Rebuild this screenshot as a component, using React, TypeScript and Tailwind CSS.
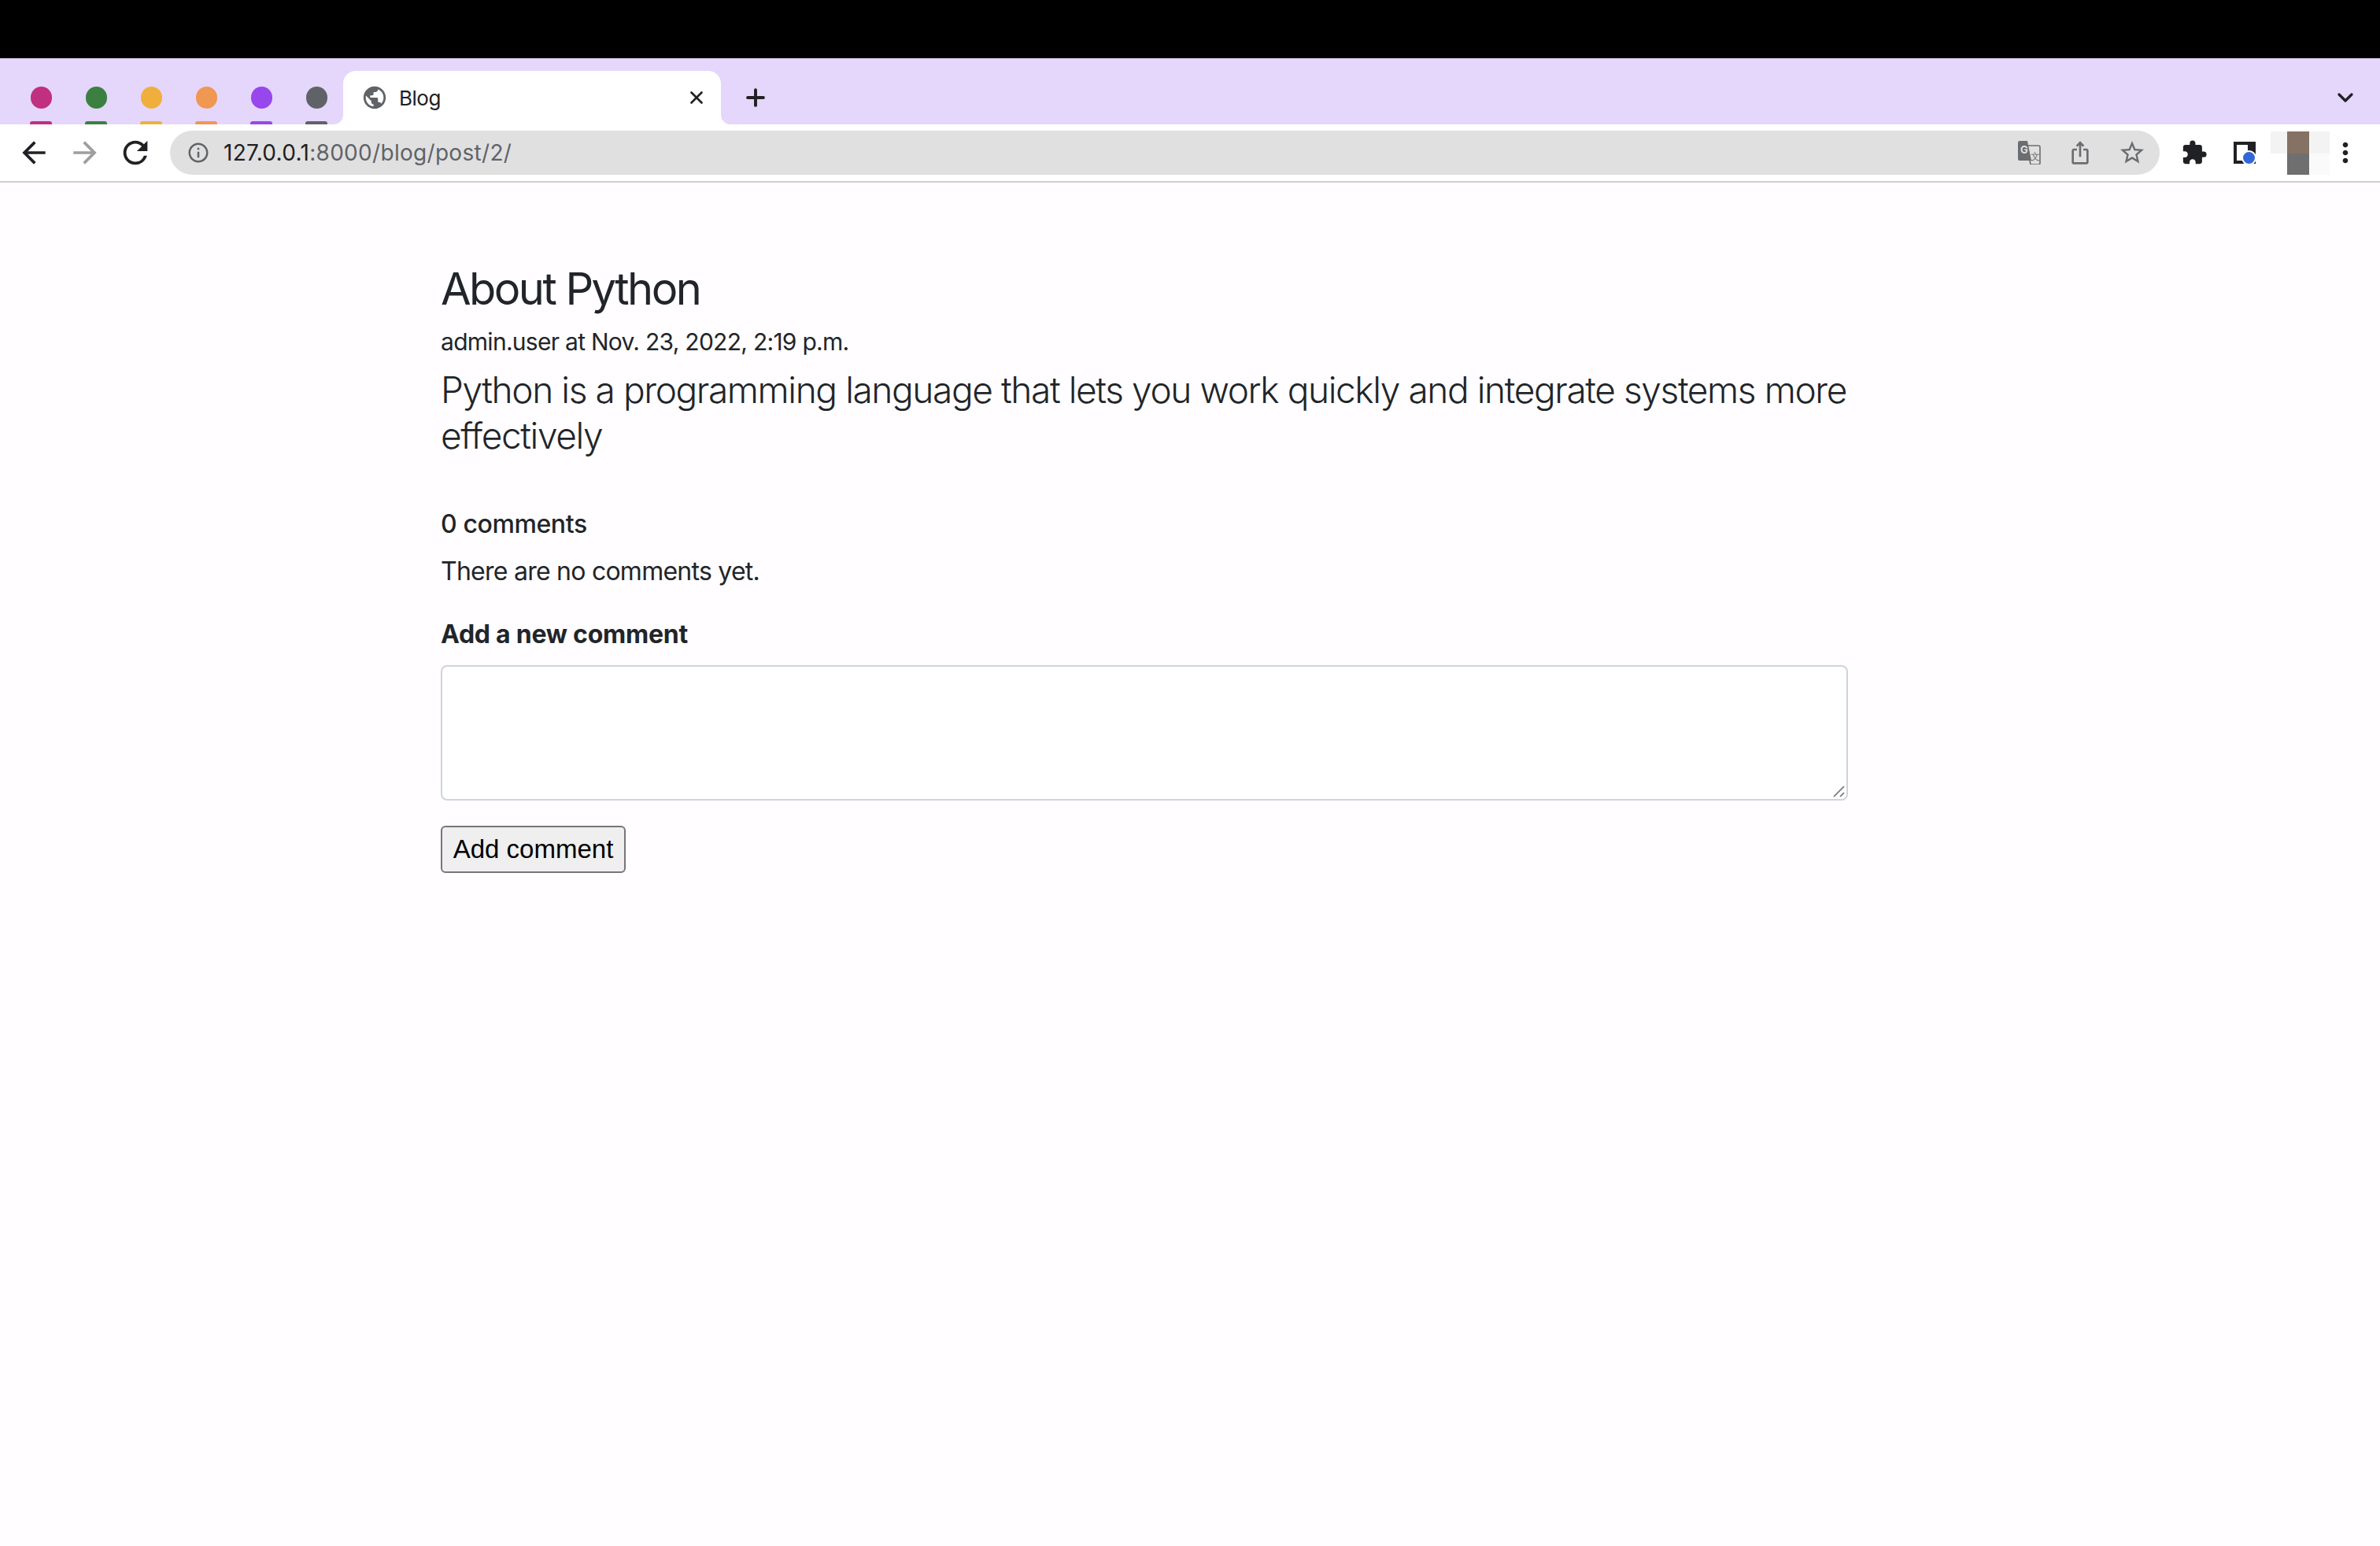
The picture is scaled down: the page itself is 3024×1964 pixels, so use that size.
import React from "react";
import { ChevronDown, Plus, X } from "lucide-react";
import {
  MdArrowBack,
  MdArrowForward,
  MdExtension,
  MdInfoOutline,
  MdIosShare,
  MdMoreVert,
  MdPublic,
  MdRefresh,
  MdStarBorder,
} from "react-icons/md";

const pinnedTabs = [
  "bg-[#c12f81]",
  "bg-[#3b8040]",
  "bg-[#f0af3c]",
  "bg-[#f09752]",
  "bg-[#9747ec]",
  "bg-[#5f6368]",
];

const TranslateIcon = () => (
  <svg width="30" height="30" viewBox="0 0 30 30">
    <path d="M1 2a2 2 0 0 1 2-2h10l5 25H3a2 2 0 0 1-2-2z" fill="#6b6d70" />
    <path
      d="M13 6h14a2 2 0 0 1 2 2v20a2 2 0 0 1-2 2H17l-1-5"
      fill="none"
      stroke="#6b6d70"
      strokeWidth="1.6"
    />
    <text x="4" y="16" fontSize="13" fontWeight="700" fill="#e0e0e0" fontFamily="Inter, sans-serif">
      G
    </text>
    <text x="17" y="24" fontSize="12" fill="#6b6d70" fontFamily="Inter, sans-serif">
      文
    </text>
  </svg>
);

const SidePanelIcon = () => (
  <div className="relative w-[28px] h-[28px] bg-[#202124]">
    <div className="absolute left-[4px] top-[4px] w-[14px] h-[20px] bg-white" />
    <div className="absolute right-[-1px] bottom-[-2px] w-[15px] h-[15px] rounded-full bg-[#3367d6] border-2 border-white box-content" />
  </div>
);

const Avatar = () => (
  <div className="grid grid-cols-[21px_28px_26px] grid-rows-[28px_27px] w-[75px] h-[55px]">
    <div className="bg-[#f3f3f3]" />
    <div className="bg-[#857264]" />
    <div className="bg-[#f3f3f3]" />
    <div className="bg-white" />
    <div className="bg-[#6f6f6f]" />
    <div className="bg-[#fafafa]" />
  </div>
);

const TabStrip = () => (
  <div className="flex h-[84px] bg-[#e5d6fb] pl-[17px]">
    {pinnedTabs.map((color) => (
      <div key={color} className="w-[70px] h-full flex flex-col items-center justify-end">
        <div className={`w-[27px] h-[28px] rounded-full ${color}`} />
        <div className={`w-[28px] h-[4px] mt-[16px] rounded-t-[3px] ${color}`} />
      </div>
    ))}
    <div className="relative w-[480px] h-[68px] mt-[16px] ml-[-1px] bg-white rounded-t-[16px] flex items-center pl-[26px] pr-[18px]">
      {/* flared corners at the foot of the active tab */}
      <svg className="absolute left-[-12px] bottom-0" width="12" height="12" viewBox="0 0 12 12">
        <path d="M12 0v12H0A12 12 0 0 0 12 0z" fill="#fff" />
      </svg>
      <svg className="absolute right-[-12px] bottom-0" width="12" height="12" viewBox="0 0 12 12">
        <path d="M0 0v12h12A12 12 0 0 1 0 0z" fill="#fff" />
      </svg>
      <MdPublic className="w-[34px] h-[34px] text-[#5f6368] -ml-[3px]" />
      <span className="ml-[14px] text-[26px] tracking-[-0.5px] text-[#202124]">Blog</span>
      <X className="w-[26px] h-[26px] ml-auto text-[#202124]" strokeWidth={2.5} />
    </div>
    <div className="flex items-center h-[52px] mt-[24px] ml-[27px]">
      <Plus className="w-[34px] h-[34px] text-[#202124]" strokeWidth={2.75} />
    </div>
    <div className="flex items-center h-[52px] mt-[24px] ml-auto mr-[28px]">
      <ChevronDown className="w-[32px] h-[32px] text-[#202124]" strokeWidth={2.5} />
    </div>
  </div>
);

const Toolbar = () => (
  <div className="flex items-center h-[74px] bg-white border-b-2 border-[#cfcfcf] pl-[21px]">
    <MdArrowBack className="w-[44px] h-[44px] text-[#202124]" />
    <MdArrowForward className="w-[44px] h-[44px] ml-[21px] text-[#9e9e9e]" />
    <MdRefresh className="w-[46px] h-[46px] ml-[19px] text-[#202124]" />
    <div className="flex items-center w-[2528px] h-[56px] ml-[21px] rounded-full bg-[#e0e0e0] pl-[21px]">
      <MdInfoOutline className="w-[30px] h-[30px] text-[#5f6368]" />
      <span className="ml-[17px] text-[28px] tracking-[0.3px] text-[#202124]">
        127.0.0.1<span className="text-[#5f6368]">:8000/blog/post/2/</span>
      </span>
      <div className="ml-auto flex items-center gap-[34px] pr-[17px]">
        <TranslateIcon />
        <MdIosShare className="w-[32px] h-[32px] text-[#6b6d70]" />
        <MdStarBorder className="w-[36px] h-[36px] text-[#6b6d70] -ml-[2px]" />
      </div>
    </div>
    <MdExtension className="w-[34px] h-[34px] ml-[27px] text-[#202124]" />
    <div className="ml-[33px]">
      <SidePanelIcon />
    </div>
    <div className="ml-[19px]">
      <Avatar />
    </div>
    <MdMoreVert className="w-[40px] h-[40px] text-[#202124]" />
  </div>
);

const App: React.FC = () => {
  return (
    <div className="w-[3024px] min-h-[1964px] bg-[#fffdff] font-['Inter',sans-serif]">
      <div className="h-[74px] bg-black" />
      <TabStrip />
      <Toolbar />

      <main className="w-[1788px] ml-[560px] pt-[99px] text-[#212529]">
        <h1 className="text-[56px] leading-[72px] tracking-[-2.55px]">About Python</h1>
        <p className="mt-[7px] text-[30px] leading-[48px] tracking-[-0.72px]">
          admin.user at Nov. 23, 2022, 2:19 p.m.
        </p>
        <p className="mt-[8px] text-[46px] leading-[58px] tracking-[-1.4px] font-light">
          Python is a programming language that lets you work quickly and integrate systems more effectively
        </p>

        <h2 className="mt-[60px] text-[32px] leading-[48px] tracking-[-0.4px] font-medium">0 comments</h2>
        <p className="mt-[12px] text-[32px] leading-[48px] tracking-[-0.75px]">There are no comments yet.</p>

        <h2 className="mt-[32px] text-[32px] leading-[48px] tracking-[-0.25px] font-bold">Add a new comment</h2>
        <div className="relative mt-[15px]">
          <textarea className="block w-full h-[172px] bg-white border-2 border-[#ced4da] rounded-[8px] outline-none resize-none" />
          <svg className="absolute right-[4px] bottom-[4px]" width="16" height="16" viewBox="0 0 16 16">
            <path d="M2 15 15 2M10 15l5-5" stroke="#6e6e6e" strokeWidth="1.6" fill="none" />
          </svg>
        </div>
        <button className="block mt-[32px] h-[60px] w-[235px] bg-[#efefef] border-2 border-[#767676] rounded-[6px] font-['Liberation_Sans',Arial,sans-serif] text-[33px] text-black">
          Add comment
        </button>
      </main>
    </div>
  );
};

export default App;
